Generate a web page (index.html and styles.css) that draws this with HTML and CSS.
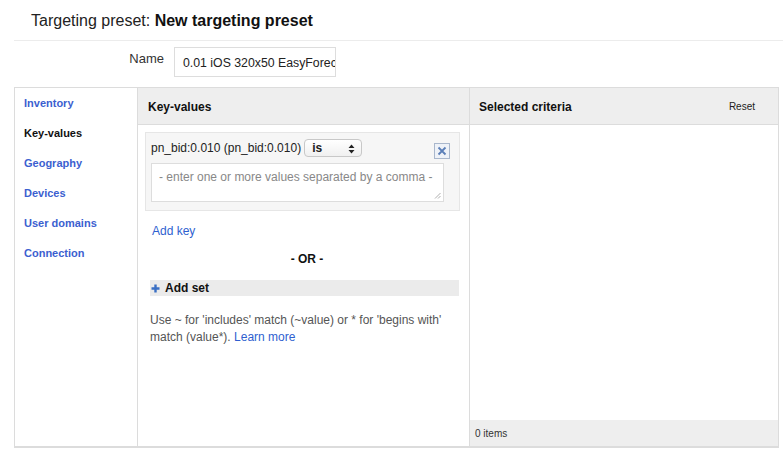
FILE: index.html
```
<!DOCTYPE html>
<html>
<head>
<meta charset="utf-8">
<link rel="stylesheet" href="styles.css">
</head>
<body>
<div class="title">Targeting preset: <b>New targeting preset</b></div>
<div class="name-row">
  <label class="name-label">Name</label>
  <div class="name-input">0.01 iOS 320x50 EasyForec</div>
</div>
<div class="panel">
  <nav class="nav">
    <a class="nav-item">Inventory</a>
    <a class="nav-item active">Key-values</a>
    <a class="nav-item">Geography</a>
    <a class="nav-item">Devices</a>
    <a class="nav-item">User domains</a>
    <a class="nav-item">Connection</a>
  </nav>
  <section class="middle">
    <div class="col-head">Key-values</div>
    <div class="mid-body">
      <div class="key-box">
        <div class="key-row">
          <span class="key-name">pn_bid:0.010 (pn_bid:0.010)</span>
          <span class="select">is<svg class="arrows" width="7" height="10" viewBox="0 0 7 10"><path d="M3.5 0.5 L6.5 4 L0.5 4 Z M3.5 9.5 L6.5 6 L0.5 6 Z" fill="#222"/></svg></span>
          <span class="close"><svg width="12" height="12" viewBox="0 0 12 12"><path d="M2.5 2.5 L9.5 9.5 M9.5 2.5 L2.5 9.5" stroke="#5b7fb8" stroke-width="1.8"/></svg></span>
        </div>
        <div class="textarea">- enter one or more values separated by a comma -<svg class="grip" width="7" height="7" viewBox="0 0 7 7"><path d="M6.5 1 L1 6.5 M6.5 4 L4 6.5" stroke="#999" stroke-width="0.8"/></svg></div>
      </div>
      <a class="add-key">Add key</a>
      <div class="or">- OR -</div>
      <div class="add-set"><svg width="9" height="9" viewBox="0 0 9 9"><path d="M4.5 0.5 V8.5 M0.5 4.5 H8.5" stroke="#3a6fc4" stroke-width="2.4"/></svg><span>Add set</span></div>
      <p class="help">Use ~ for 'includes' match (~value) or * for 'begins with' match (value*). <a class="link">Learn more</a></p>
    </div>
  </section>
  <section class="right">
    <div class="col-head right-head"><span>Selected criteria</span><span class="reset">Reset</span></div>
    <div class="right-body"></div>
    <div class="right-foot">0 items</div>
  </section>
</div>
</body>
</html>
```
FILE: styles.css
```
* { box-sizing: border-box; }
body {
  margin: 0;
  font-family: "Liberation Sans", Arial, sans-serif;
  color: #222;
  background: #fff;
  width: 783px;
  height: 460px;
  overflow: hidden;
}
.title {
  margin-left: 14px;
  padding-left: 17px;
  height: 41px;
  padding-top: 12px;
  font-size: 16px;
  color: #222;
  border-bottom: 1px solid #ececec;
}
.title b { color: #111; }
.name-row {
  display: flex;
  align-items: flex-start;
  margin-top: 6px;
  height: 30px;
}
.name-label {
  width: 164px;
  text-align: right;
  font-size: 13px;
  padding-top: 4px;
  color: #333;
}
.name-input {
  margin-left: 10px;
  width: 162px;
  height: 30px;
  border: 1px solid #ddd;
  font-size: 12.3px;
  padding: 8px 0 0 8px;
  color: #222;
  white-space: nowrap;
  overflow: hidden;
}
.panel {
  margin: 10px 0 0 14px;
  width: 765px;
  height: 361px;
  border: 1px solid #dcdcdc;
  border-bottom: 2px solid #dcdcdc;
  display: flex;
}
.nav {
  width: 123px;
  border-right: 1px solid #dcdcdc;
  display: flex;
  flex-direction: column;
  padding: 9px 0 0 9px;
  gap: 17px;
}
.nav-item {
  font-size: 11px;
  font-weight: bold;
  color: #3c5fd0;
  line-height: 13px;
}
.nav-item.active { color: #111; }
.middle {
  width: 332px;
  border-right: 1px solid #dcdcdc;
  display: flex;
  flex-direction: column;
}
.col-head {
  height: 37px;
  background: #eeeeee;
  border-bottom: 1px solid #dcdcdc;
  font-size: 12px;
  font-weight: bold;
  color: #111;
  padding: 12px 0 0 10px;
}
.mid-body {
  padding: 7px 10px 0 7px;
  display: flex;
  flex-direction: column;
}
.key-box {
  width: 315px;
  height: 79px;
  background: #f6f6f6;
  border: 1px solid #e6e6e6;
  padding: 5px 0 0 5px;
}
.key-row {
  display: flex;
  align-items: center;
  height: 19px;
}
.key-name {
  font-size: 12px;
  color: #222;
}
.select {
  margin-left: 3px;
  width: 58px;
  height: 18px;
  border: 1px solid #c8c8c8;
  border-radius: 4px;
  background: linear-gradient(#fff, #f0f0f0);
  font-size: 12px;
  font-weight: bold;
  padding: 1px 0 0 7px;
  display: flex;
  justify-content: space-between;
  align-items: flex-start;
}
.arrows { margin: 3px 6px 0 0; }
.close {
  margin-left: 72px;
  margin-top: 6px;
  width: 16px;
  height: 16px;
  border: 1px solid #a9b7cc;
  background: #eef2f8;
  display: flex;
  align-items: center;
  justify-content: center;
}
.textarea {
  position: relative;
  margin-top: 6px;
  width: 293px;
  height: 39px;
  background: #fff;
  border: 1px solid #ddd;
  font-size: 12px;
  color: #888;
  padding: 6px 0 0 7px;
}
.grip { position: absolute; right: 2px; bottom: 2px; }
.add-key {
  margin: 13px 0 0 7px;
  font-size: 12px;
  color: #2f5fd0;
}
.or {
  margin-top: 14px;
  text-align: center;
  font-size: 12px;
  font-weight: bold;
  padding-left: 10px;
  color: #111;
}
.add-set {
  margin: 14px 0 0 5px;
  width: 309px;
  height: 16px;
  background: #ebebeb;
  display: flex;
  align-items: center;
  gap: 5px;
  padding-left: 1px;
  font-size: 12px;
  font-weight: bold;
  color: #111;
}
.help {
  margin: 16px 0 0 5px;
  width: 305px;
  font-size: 12px;
  line-height: 17px;
  color: #555;
}
.link { color: #2f5fd0; }
.right {
  flex: 1;
  display: flex;
  flex-direction: column;
}
.right-head {
  display: flex;
  justify-content: space-between;
  padding-left: 9px;
  padding-right: 23px;
}
.reset {
  font-size: 10px;
  font-weight: normal;
  color: #222;
  padding-top: 1px;
}
.right-body { flex: 1; }
.right-foot {
  height: 26px;
  background: #eeeeee;
  font-size: 10px;
  color: #333;
  padding: 8px 0 0 5px;
}
```
